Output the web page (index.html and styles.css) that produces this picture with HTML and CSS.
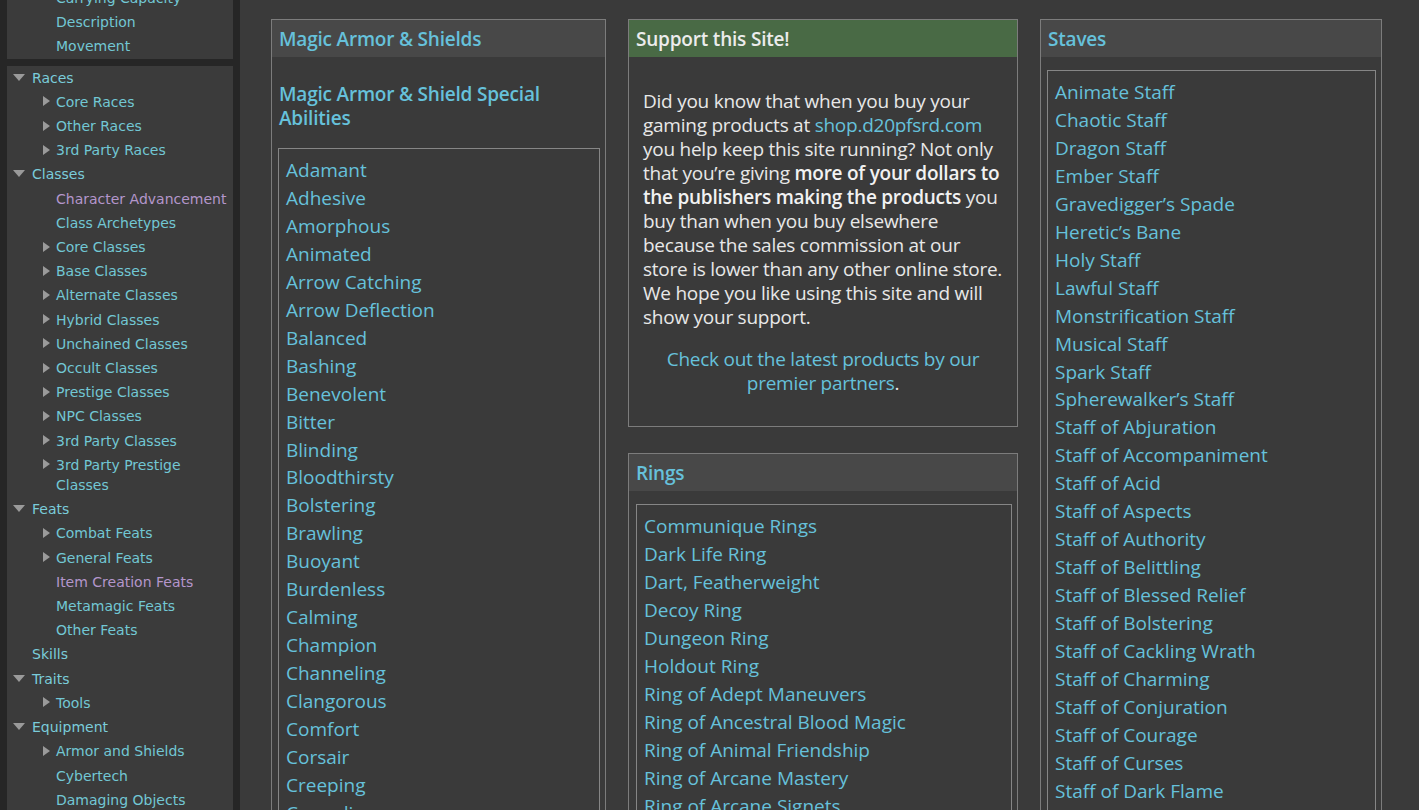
FILE: index.html
```html
<!DOCTYPE html>
<html lang="en">
<head>
<meta charset="utf-8">
<title>Magic Items</title>
<link rel="stylesheet" href="styles.css">
</head>
<body>
<div class="page">
  <aside class="sidebar">
    <div class="sidebar-scroll">
      <div class="panel">
        <ul class="tree">
          <li class="item sub"><span class="tw"></span><a href="#">Carrying Capacity</a></li>
          <li class="item sub"><span class="tw"></span><a href="#">Description</a></li>
          <li class="item sub"><span class="tw"></span><a href="#">Movement</a></li>
        </ul>
      </div>
      <div class="panel panel-fill">
        <ul class="tree">
          <li class="item top"><span class="tw"><i class="tri-down"></i></span><a href="#">Races</a></li>
          <li class="item sub"><span class="tw"><i class="tri-right"></i></span><a href="#">Core Races</a></li>
          <li class="item sub"><span class="tw"><i class="tri-right"></i></span><a href="#">Other Races</a></li>
          <li class="item sub"><span class="tw"><i class="tri-right"></i></span><a href="#">3rd Party Races</a></li>
          <li class="item top"><span class="tw"><i class="tri-down"></i></span><a href="#">Classes</a></li>
          <li class="item sub"><span class="tw"></span><a href="#" class="visited">Character Advancement</a></li>
          <li class="item sub"><span class="tw"></span><a href="#">Class Archetypes</a></li>
          <li class="item sub"><span class="tw"><i class="tri-right"></i></span><a href="#">Core Classes</a></li>
          <li class="item sub"><span class="tw"><i class="tri-right"></i></span><a href="#">Base Classes</a></li>
          <li class="item sub"><span class="tw"><i class="tri-right"></i></span><a href="#">Alternate Classes</a></li>
          <li class="item sub"><span class="tw"><i class="tri-right"></i></span><a href="#">Hybrid Classes</a></li>
          <li class="item sub"><span class="tw"><i class="tri-right"></i></span><a href="#">Unchained Classes</a></li>
          <li class="item sub"><span class="tw"><i class="tri-right"></i></span><a href="#">Occult Classes</a></li>
          <li class="item sub"><span class="tw"><i class="tri-right"></i></span><a href="#">Prestige Classes</a></li>
          <li class="item sub"><span class="tw"><i class="tri-right"></i></span><a href="#">NPC Classes</a></li>
          <li class="item sub"><span class="tw"><i class="tri-right"></i></span><a href="#">3rd Party Classes</a></li>
          <li class="item sub"><span class="tw"><i class="tri-right"></i></span><a href="#">3rd Party Prestige Classes</a></li>
          <li class="item top"><span class="tw"><i class="tri-down"></i></span><a href="#">Feats</a></li>
          <li class="item sub"><span class="tw"><i class="tri-right"></i></span><a href="#">Combat Feats</a></li>
          <li class="item sub"><span class="tw"><i class="tri-right"></i></span><a href="#">General Feats</a></li>
          <li class="item sub"><span class="tw"></span><a href="#" class="visited">Item Creation Feats</a></li>
          <li class="item sub"><span class="tw"></span><a href="#">Metamagic Feats</a></li>
          <li class="item sub"><span class="tw"></span><a href="#">Other Feats</a></li>
          <li class="item top"><span class="tw"></span><a href="#">Skills</a></li>
          <li class="item top"><span class="tw"><i class="tri-down"></i></span><a href="#">Traits</a></li>
          <li class="item sub"><span class="tw"><i class="tri-right"></i></span><a href="#">Tools</a></li>
          <li class="item top"><span class="tw"><i class="tri-down"></i></span><a href="#">Equipment</a></li>
          <li class="item sub"><span class="tw"><i class="tri-right"></i></span><a href="#">Armor and Shields</a></li>
          <li class="item sub"><span class="tw"></span><a href="#">Cybertech</a></li>
          <li class="item sub"><span class="tw"></span><a href="#">Damaging Objects</a></li>
          <li class="item sub"><span class="tw"></span><a href="#">Goods and Services</a></li>
        </ul>
      </div>
    </div>
  </aside>

  <main class="main">
    <div class="col">
      <section class="box">
        <h2 class="box-head">Magic Armor &amp; Shields</h2>
        <div class="box-body">
          <h3 class="subhead">Magic Armor &amp; Shield Special Abilities</h3>
          <ul class="list">
            <li><a href="#">Adamant</a></li>
            <li><a href="#">Adhesive</a></li>
            <li><a href="#">Amorphous</a></li>
            <li><a href="#">Animated</a></li>
            <li><a href="#">Arrow Catching</a></li>
            <li><a href="#">Arrow Deflection</a></li>
            <li><a href="#">Balanced</a></li>
            <li><a href="#">Bashing</a></li>
            <li><a href="#">Benevolent</a></li>
            <li><a href="#">Bitter</a></li>
            <li><a href="#">Blinding</a></li>
            <li><a href="#">Bloodthirsty</a></li>
            <li><a href="#">Bolstering</a></li>
            <li><a href="#">Brawling</a></li>
            <li><a href="#">Buoyant</a></li>
            <li><a href="#">Burdenless</a></li>
            <li><a href="#">Calming</a></li>
            <li><a href="#">Champion</a></li>
            <li><a href="#">Channeling</a></li>
            <li><a href="#">Clangorous</a></li>
            <li><a href="#">Comfort</a></li>
            <li><a href="#">Corsair</a></li>
            <li><a href="#">Creeping</a></li>
            <li><a href="#">Crusading</a></li>
            <li><a href="#">Cushioned</a></li>
          </ul>
        </div>
      </section>
    </div>

    <div class="col">
      <section class="box">
        <h2 class="box-head box-head-green">Support this Site!</h2>
        <div class="box-body support">
          <p>Did you know that when you buy your gaming products at <a href="#">shop.d20pfsrd.com</a> you help keep this site running? Not only that you’re giving <strong>more of your dollars to the publishers making the products</strong> you buy than when you buy elsewhere because the sales commission at our store is lower than any other online store. We hope you like using this site and will show your support.</p>
          <p class="center"><a href="#">Check out the latest products by our premier partners</a>.</p>
        </div>
      </section>
      <section class="box">
        <h2 class="box-head">Rings</h2>
        <div class="box-body listbody rings">
          <ul class="list">
            <li><a href="#">Communique Rings</a></li>
            <li><a href="#">Dark Life Ring</a></li>
            <li><a href="#">Dart, Featherweight</a></li>
            <li><a href="#">Decoy Ring</a></li>
            <li><a href="#">Dungeon Ring</a></li>
            <li><a href="#">Holdout Ring</a></li>
            <li><a href="#">Ring of Adept Maneuvers</a></li>
            <li><a href="#">Ring of Ancestral Blood Magic</a></li>
            <li><a href="#">Ring of Animal Friendship</a></li>
            <li><a href="#">Ring of Arcane Mastery</a></li>
            <li><a href="#">Ring of Arcane Signets</a></li>
            <li><a href="#">Ring of Arcane Talent</a></li>
          </ul>
        </div>
      </section>
    </div>

    <div class="col">
      <section class="box">
        <h2 class="box-head">Staves</h2>
        <div class="box-body listbody">
          <ul class="list">
            <li><a href="#">Animate Staff</a></li>
            <li><a href="#">Chaotic Staff</a></li>
            <li><a href="#">Dragon Staff</a></li>
            <li><a href="#">Ember Staff</a></li>
            <li><a href="#">Gravedigger’s Spade</a></li>
            <li><a href="#">Heretic’s Bane</a></li>
            <li><a href="#">Holy Staff</a></li>
            <li><a href="#">Lawful Staff</a></li>
            <li><a href="#">Monstrification Staff</a></li>
            <li><a href="#">Musical Staff</a></li>
            <li><a href="#">Spark Staff</a></li>
            <li><a href="#">Spherewalker’s Staff</a></li>
            <li><a href="#">Staff of Abjuration</a></li>
            <li><a href="#">Staff of Accompaniment</a></li>
            <li><a href="#">Staff of Acid</a></li>
            <li><a href="#">Staff of Aspects</a></li>
            <li><a href="#">Staff of Authority</a></li>
            <li><a href="#">Staff of Belittling</a></li>
            <li><a href="#">Staff of Blessed Relief</a></li>
            <li><a href="#">Staff of Bolstering</a></li>
            <li><a href="#">Staff of Cackling Wrath</a></li>
            <li><a href="#">Staff of Charming</a></li>
            <li><a href="#">Staff of Conjuration</a></li>
            <li><a href="#">Staff of Courage</a></li>
            <li><a href="#">Staff of Curses</a></li>
            <li><a href="#">Staff of Dark Flame</a></li>
            <li><a href="#">Staff of Dark Mists</a></li>
          </ul>
        </div>
      </section>
    </div>
  </main>
</div>
</body>
</html>
```

FILE: styles.css
```css
* { box-sizing: border-box; }

html, body {
  margin: 0;
  height: 100%;
}

body {
  background: #3a3a3a;
  color: #e6e6e6;
  font-family: "Open Sans", "Noto Sans", sans-serif;
  overflow: hidden;
}

a {
  color: #66c1db;
  text-decoration: none;
}

.page {
  display: flex;
  height: 100vh;
  overflow: hidden;
}

/* ---------- Sidebar ---------- */
.sidebar {
  flex: none;
  width: 240px;
  background: #262626;
  padding: 0 7px;
  overflow: hidden;
}

.sidebar-scroll {
  margin-top: -16px;
  display: flex;
  flex-direction: column;
  gap: 7px;
}

.panel {
  background: #3b3b3b;
  padding: 2px 5px 0 0;
}

.panel-fill {
  padding-top: 0;
  min-height: 900px;
}

.tree {
  list-style: none;
  margin: 0;
  padding: 0;
  font-family: "DejaVu Sans", Verdana, sans-serif;
  font-size: 14px;
}

.item {
  display: flex;
  align-items: flex-start;
  padding: 2px 0;
  line-height: 20.2px;
}

.item a {
  color: #72c7d4;
}

.item.top a {
  color: #7accda;
}

.item a.visited {
  color: #b496cb;
}

.tw {
  flex: none;
  width: 25px;
  height: 20px;
  display: flex;
  align-items: center;
}

.item.top .tw { padding-left: 6px; }
.item.sub { padding-left: 24px; }
.item.sub .tw { padding-left: 12px; }

.tri-down {
  display: block;
  width: 0;
  height: 0;
  border-left: 6px solid transparent;
  border-right: 6px solid transparent;
  border-top: 7px solid #9a9a9a;
  margin-top: -1px;
}

.tri-right {
  display: block;
  width: 0;
  height: 0;
  border-top: 5px solid transparent;
  border-bottom: 5px solid transparent;
  border-left: 7px solid #9a9a9a;
  margin-top: -1px;
}

/* ---------- Main ---------- */
.main {
  flex: 1;
  background: #3a3a3a;
  padding: 19px 0 0 31px;
  display: grid;
  grid-template-columns: 335px 390px 342px;
  column-gap: 22px;
  align-items: start;
}

.col {
  display: flex;
  flex-direction: column;
  gap: 26px;
}

.box {
  border: 1px solid #7c7c7c;
  background: #3a3a3a;
}

.box-head {
  margin: 0;
  background: #484848;
  color: #66c1db;
  font-size: 19px;
  line-height: 25px;
  font-weight: 600;
  padding: 7px 7px 5px;
  letter-spacing: -0.2px;
}

.box-head-green {
  background: #496a45;
  color: #ececec;
}

.box-body {
  padding: 0 5px 0 6px;
}

.subhead {
  margin: 25px 0 18px 1px;
  color: #66c1db;
  font-size: 19px;
  line-height: 24px;
  font-weight: 600;
  letter-spacing: -0.2px;
}

.listbody {
  padding-top: 13px;
}

.rings {
  padding-left: 7px;
}

.list {
  list-style: none;
  margin: 0;
  padding: 8px 7px 7px;
  border: 1px solid #868686;
  font-size: 19px;
  line-height: 27.95px;
}

.support {
  padding: 14px 10px 13px 14px;
  font-size: 19px;
  line-height: 24px;
  color: #e8e8e8;
  letter-spacing: -0.25px;
}

.support p {
  margin: 18px 0;
}

.support strong {
  color: #f2f2f2;
  font-weight: 600;
}

.center {
  text-align: center;
  padding-right: 4px;
}
```
